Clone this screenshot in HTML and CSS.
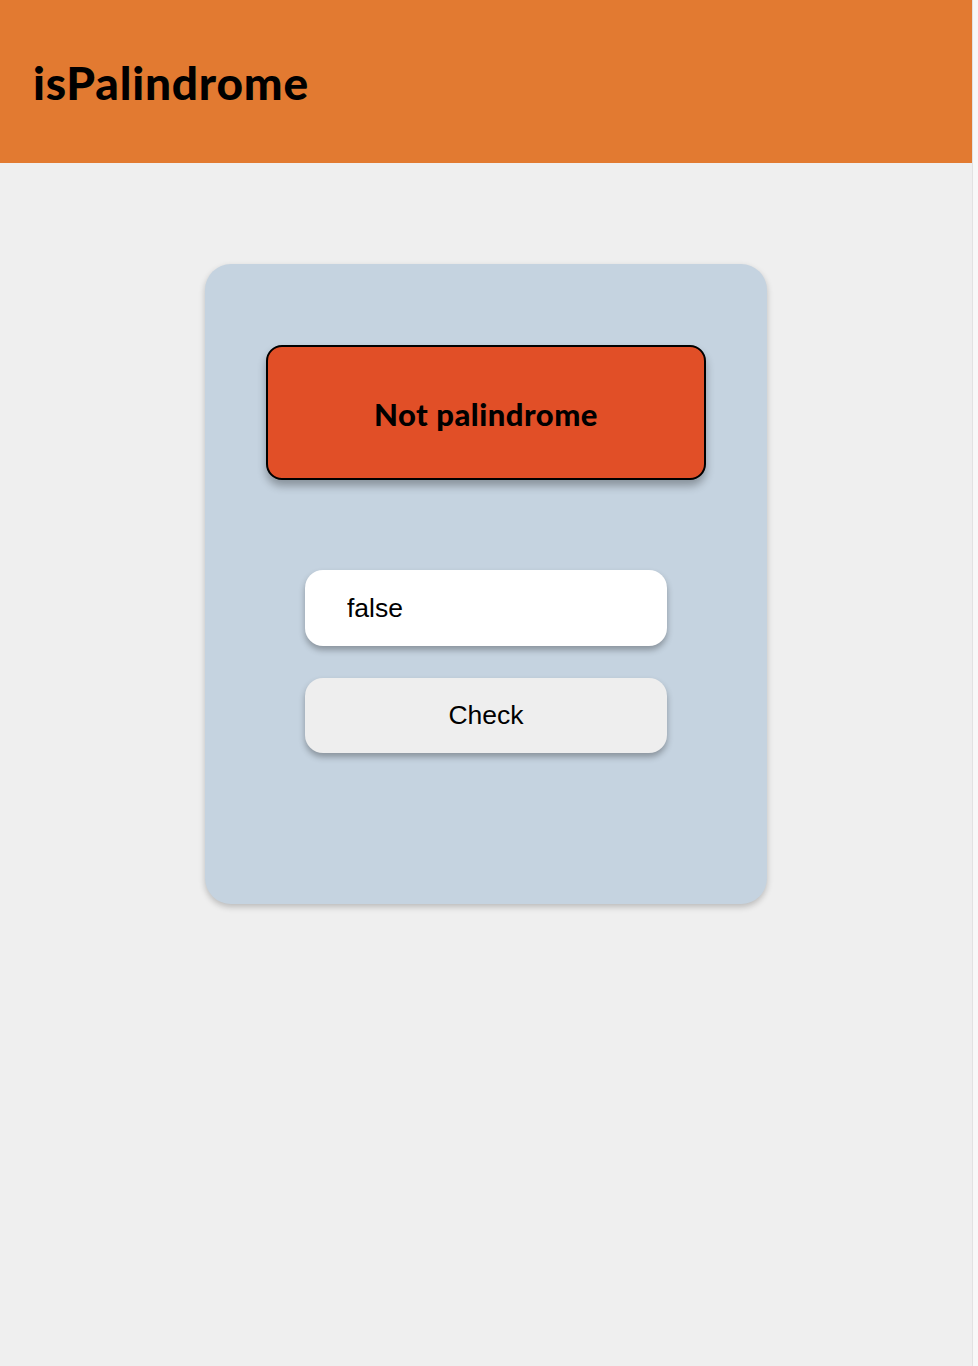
FILE: index.html
```html
<!DOCTYPE html>
<html lang="en">
<head>
<meta charset="utf-8">
<title>isPalindrome</title>
<link rel="stylesheet" href="styles.css">
</head>
<body>
<div class="frame">
  <div class="page">
    <header class="header">
      <h1 class="title">isPalindrome</h1>
    </header>
    <main class="main">
      <section class="card">
        <div class="result">Not palindrome</div>
        <div class="form">
          <input class="field" type="text" value="false">
          <button class="check" type="button">Check</button>
        </div>
      </section>
    </main>
  </div>
  <div class="scrollbar"></div>
</div>
</body>
</html>
```

FILE: styles.css
```css
html, body {
  margin: 0;
  padding: 0;
  height: 100%;
}
body {
  background: #efefef;
  font-family: "Liberation Sans", Arial, sans-serif;
}
.frame {
  display: flex;
  min-height: 1366px;
}
.page {
  flex: 1;
  display: flex;
  flex-direction: column;
}
.scrollbar {
  width: 5px;
  background: #f8f8f8;
  border-left: 1px solid #e2e2e2;
}
.header {
  height: 163px;
  background: #e27a31;
  display: flex;
  align-items: center;
  padding-left: 33px;
}
.title {
  margin: 0;
  font-family: Lato, "Open Sans", sans-serif;
  font-weight: 900;
  font-size: 46px;
  color: #000;
  letter-spacing: 0.8px;
  padding-top: 2px;
}
.main {
  display: flex;
  justify-content: center;
  padding-top: 101px;
}
.card {
  width: 562px;
  height: 640px;
  box-sizing: border-box;
  background: #c5d3e0;
  border-radius: 26px;
  box-shadow: 0 3px 6px rgba(0, 0, 0, 0.22);
  padding: 81px 61px 0;
  display: flex;
  flex-direction: column;
  align-items: center;
}
.result {
  width: 440px;
  height: 135px;
  box-sizing: border-box;
  background: #e14f27;
  border: 2px solid #000;
  border-radius: 16px;
  box-shadow: 0 6px 8px rgba(0, 0, 0, 0.3);
  display: flex;
  align-items: center;
  justify-content: center;
  font-family: Lato, "Open Sans", sans-serif;
  font-weight: 900;
  font-size: 31px;
  letter-spacing: 0.5px;
  color: #000;
  padding-top: 2px;
}
.form {
  margin-top: 90px;
  display: flex;
  flex-direction: column;
  gap: 32px;
}
.field, .check {
  width: 362px;
  height: 76px;
  box-sizing: border-box;
  border: none;
  border-radius: 18px;
  box-shadow: 0 4px 6px rgba(0, 0, 0, 0.3);
  font-family: "Liberation Sans", Arial, sans-serif;
  font-size: 26.5px;
  color: #000;
  outline: none;
}
.field {
  background: #fff;
  padding: 0 0 0 42px;
}
.check {
  background: #eeeeee;
  height: 75px;
  text-align: center;
  cursor: pointer;
}
```
